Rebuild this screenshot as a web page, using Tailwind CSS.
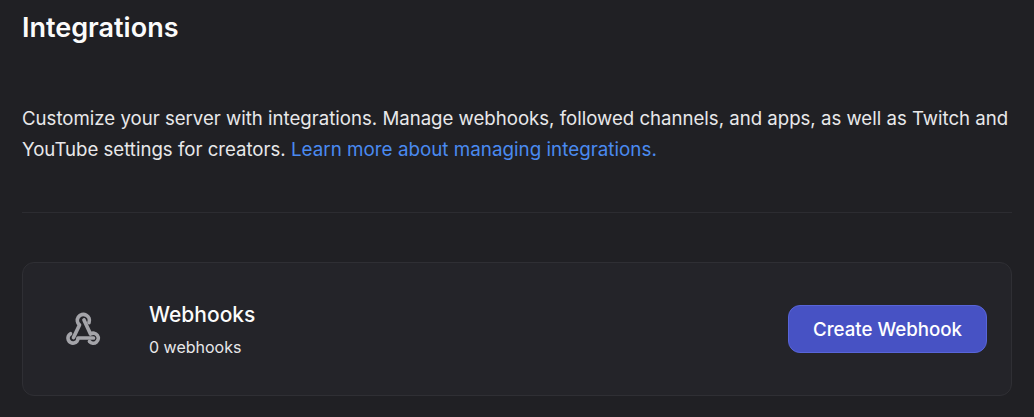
<!DOCTYPE html>
<html lang="en">
<head>
    <meta charset="UTF-8">
    <title>Integrations</title>
    <script src="https://cdn.jsdelivr.net/npm/@tailwindcss/browser@4"></script>
</head>
<body class="bg-[#202024] text-white font-['Inter',sans-serif] overflow-hidden">
    <div class="w-[1034px] h-[417px] pl-[22px] pr-[22px]">
        <h1 class="h-[55px] pt-[11px] text-[27px] leading-[34px] font-semibold text-[#fbfbfb]">Integrations</h1>

        <p class="mt-[48px] text-[18.63px] leading-[31px] text-[#e8e8ea]">
            Customize your server with integrations. Manage webhooks, followed channels, and apps, as well as Twitch and YouTube settings for creators.
            <a class="text-[18.82px] text-[#4a8af0]" href="#">Learn more about managing integrations.</a>
        </p>

        <div class="mt-[47px] h-px bg-[#2c2c31]"></div>

        <div class="mt-[49px] h-[134px] flex items-center rounded-[12px] border border-[#2f2f34] bg-[#242429] pl-[44px] pr-[24px]">
            <svg class="w-[34px] h-[34px] overflow-visible text-[#a4a4a9]" viewBox="0 0 34 34" fill="none" stroke="currentColor" stroke-width="3.7" stroke-linecap="round" stroke-linejoin="round">
                <path d="M22 10.5A6 6 0 1 0 12.5 13L6.5 25.5"/>
                <path d="M22.5 29.5A5 5 0 1 0 23.5 22L17 8"/>
                <path d="M3.5 21.8A5 5 0 1 0 11 26H26.5"/>
            </svg>
            <div class="ml-[48px] flex-1">
                <div class="text-[21px] leading-[28px] font-medium text-[#fbfbfb]">Webhooks</div>
                <div class="mt-[7px] text-[16px] leading-[22px] text-[#e8e8ea]">0 webhooks</div>
            </div>
            <button class="w-[199px] h-[48px] pt-[2px] rounded-[12px] border border-[#5865d8] bg-[#4752c4] text-[18.7px] font-medium text-white">Create Webhook</button>
        </div>
    </div>
</body>
</html>
